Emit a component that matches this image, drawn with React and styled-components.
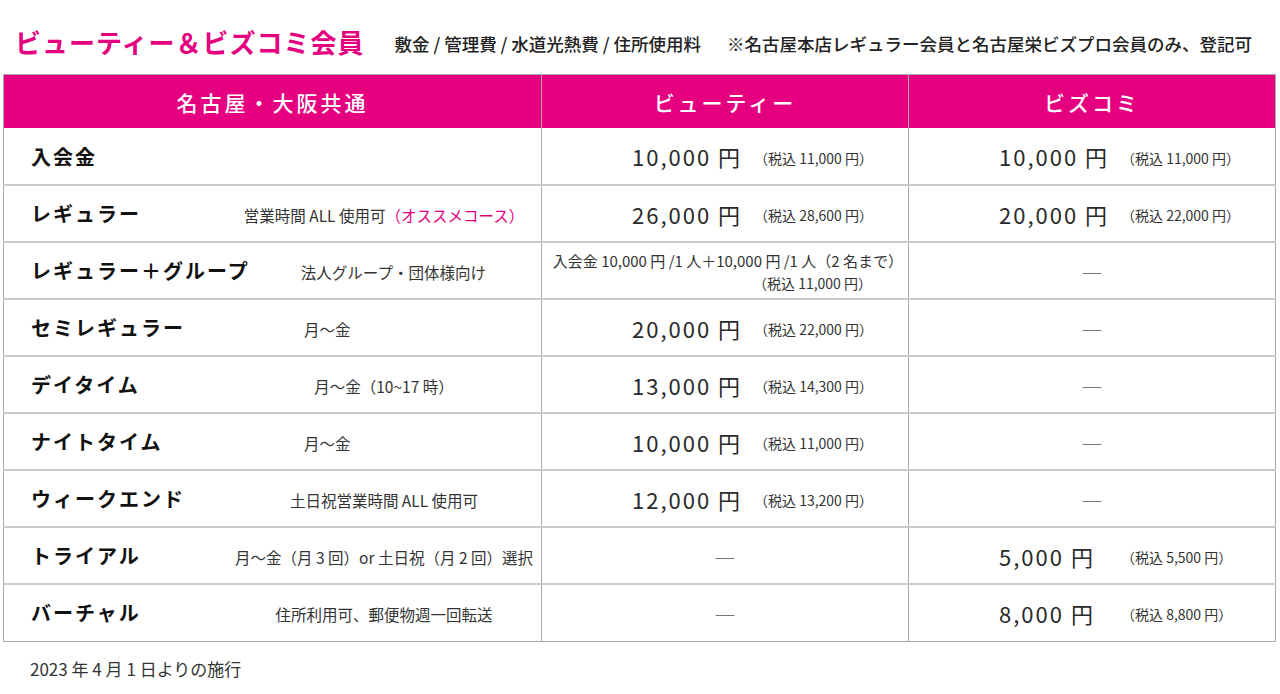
import React from "react";
import styled, { createGlobalStyle } from "styled-components";

const GlobalStyle = createGlobalStyle`
  body {
    margin: 0;
    background: #fff;
    font-family: "Noto Sans CJK JP", "Noto Sans", sans-serif;
    color: #222;
  }
`;

const PINK = "#e4007f";

const Page = styled.div`
  width: 1280px;
  padding: 0 4px 0 3px;
  box-sizing: border-box;
`;

const TitleBar = styled.div`
  height: 74px;
  display: flex;
  align-items: center;
  padding: 8px 0 0 12px;
  box-sizing: border-box;
`;

const Title = styled.h1`
  margin: 0;
  font-size: 26px;
  font-weight: 700;
  letter-spacing: 1px;
  color: ${PINK};
  white-space: nowrap;
`;

const Note = styled.div`
  margin-left: 30px;
  padding-top: 4px;
  font-size: 17.5px;
  font-weight: 500;
  color: #222;
  white-space: nowrap;
  span + span {
    margin-left: 26px;
  }
`;

const Table = styled.table`
  width: 1273px;
  border-collapse: collapse;
  table-layout: fixed;
  border: 1px solid #a9a9a9;
`;

const HeadCell = styled.th`
  height: 53px;
  padding: 0;
  background: ${PINK};
  color: #fff;
  font-size: 21px;
  font-weight: 500;
  letter-spacing: 3px;
  text-align: center;
  border-left: 1px solid #a9a9a9;
  &:first-child {
    border-left: none;
  }
`;

const Row = styled.tr`
  height: 57px;
  border-top: 2px solid #cacaca;
  &:first-child {
    border-top: none;
  }
`;

const Cell = styled.td`
  padding: 0;
  border-left: 1px solid #a9a9a9;
  vertical-align: middle;
  &:first-child {
    border-left: none;
  }
`;

const PlanBox = styled.div`
  display: flex;
  align-items: center;
  padding: 0 4px 0 27px;
`;

const PlanName = styled.span`
  flex: 0 0 auto;
  min-width: 200px;
  font-size: 20px;
  font-weight: 700;
  letter-spacing: 2px;
  color: #111;
  white-space: nowrap;
`;

const Desc = styled.span`
  flex: 1;
  padding-left: ${(p) => (p.$left ? "73px" : "0")};
  padding-top: 3px;
  font-size: 15.5px;
  color: #333;
  text-align: ${(p) => (p.$left ? "left" : "center")};
  white-space: nowrap;
`;

const Pink = styled.span`
  color: ${PINK};
`;

const PriceBox = styled.div`
  display: flex;
  align-items: center;
  padding-left: 90px;
`;

const Big = styled.span`
  flex: 0 0 122px;
  font-size: 22px;
  letter-spacing: 2px;
  color: #2a2a2a;
  white-space: nowrap;
`;

const Small = styled.span`
  font-size: 14px;
  color: #333;
  white-space: nowrap;
  padding-top: 3px;
`;

const Dash = styled.div`
  text-align: center;
  font-size: 22px;
  color: #777;
  line-height: 1;
`;

const Stack = styled.div`
  display: flex;
  flex-direction: column;
  padding-top: 2px;
`;

const StackLine = styled.span`
  font-size: 15px;
  color: #333;
  white-space: nowrap;
  text-align: right;
  padding-right: 5px;
  line-height: 22px;
  ${(p) => p.$indent && `text-align: left; padding-left: 211px; font-size: 14px;`}
`;

const Footer = styled.div`
  margin-top: 14px;
  padding-left: 27px;
  font-size: 17px;
  color: #333;
`;

const Price = ({ value, tax }) => (
  <PriceBox>
    <Big>{value} 円</Big>
    <Small>（税込 {tax} 円）</Small>
  </PriceBox>
);

const rows = [
  { name: "入会金", desc: "", beauty: ["10,000", "11,000"], biz: ["10,000", "11,000"] },
  {
    name: "レギュラー",
    desc: (
      <>
        営業時間 ALL 使用可<Pink>（オススメコース）</Pink>
      </>
    ),
    beauty: ["26,000", "28,600"],
    biz: ["20,000", "22,000"],
  },
  { name: "レギュラー＋グループ", desc: "法人グループ・団体様向け", beauty: "group", biz: null },
  { name: "セミレギュラー", desc: "月～金", left: true, beauty: ["20,000", "22,000"], biz: null },
  { name: "デイタイム", desc: "月～金（10~17 時）", beauty: ["13,000", "14,300"], biz: null },
  { name: "ナイトタイム", desc: "月～金", left: true, beauty: ["10,000", "11,000"], biz: null },
  { name: "ウィークエンド", desc: "土日祝営業時間 ALL 使用可", beauty: ["12,000", "13,200"], biz: null },
  { name: "トライアル", desc: "月～金（月 3 回）or 土日祝（月 2 回）選択", beauty: null, biz: ["5,000", "5,500"] },
  { name: "バーチャル", desc: "住所利用可、郵便物週一回転送", beauty: null, biz: ["8,000", "8,800"] },
];

const renderPrice = (v) => {
  if (!v) return <Dash>―</Dash>;
  if (v === "group")
    return (
      <Stack>
        <StackLine>入会金 10,000 円 /1 人＋10,000 円 /1 人（2 名まで）</StackLine>
        <StackLine $indent>（税込 11,000 円）</StackLine>
      </Stack>
    );
  return <Price value={v[0]} tax={v[1]} />;
};

export default function App() {
  return (
    <Page>
      <GlobalStyle />
      <TitleBar>
        <Title>ビューティー＆ビズコミ会員</Title>
        <Note>
          <span>敷金 / 管理費 / 水道光熱費 / 住所使用料</span>
          <span>※名古屋本店レギュラー会員と名古屋栄ビズプロ会員のみ、登記可</span>
        </Note>
      </TitleBar>
      <Table>
        <colgroup>
          <col style={{ width: 538 }} />
          <col style={{ width: 367 }} />
          <col />
        </colgroup>
        <thead>
          <tr>
            <HeadCell>名古屋・大阪共通</HeadCell>
            <HeadCell>ビューティー</HeadCell>
            <HeadCell>ビズコミ</HeadCell>
          </tr>
        </thead>
        <tbody>
          {rows.map((r) => (
            <Row key={r.name}>
              <Cell>
                <PlanBox>
                  <PlanName>{r.name}</PlanName>
                  <Desc $left={r.left}>{r.desc}</Desc>
                </PlanBox>
              </Cell>
              <Cell>{renderPrice(r.beauty)}</Cell>
              <Cell>{renderPrice(r.biz)}</Cell>
            </Row>
          ))}
        </tbody>
      </Table>
      <Footer>2023 年 4 月 1 日よりの施行</Footer>
    </Page>
  );
}
